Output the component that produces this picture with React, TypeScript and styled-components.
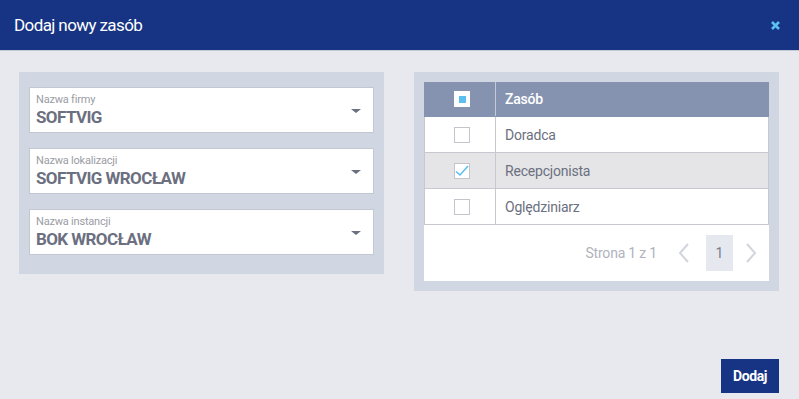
import React, { useState } from 'react';
import styled, { createGlobalStyle } from 'styled-components';

const GlobalStyle = createGlobalStyle`
  html, body {
    margin: 0;
    padding: 0;
    background: #e8e9ee;
    font-family: Roboto, "Liberation Sans", sans-serif;
  }
  * { box-sizing: border-box; }
`;

const Dialog = styled.div`
  width: 799px;
  height: 399px;
  display: flex;
  flex-direction: column;
  background: #e8e9ee;
`;

const Header = styled.div`
  height: 51px;
  flex-shrink: 0;
  background: #163384;
  border-bottom: 1px solid #c5c9d3;
  display: flex;
  align-items: center;
  justify-content: space-between;
  padding: 0 19px 0 14px;
`;

const Title = styled.h1`
  margin: 0;
  font-size: 17px;
  font-weight: 400;
  color: #ffffff;
  letter-spacing: -0.6px;
`;

const CloseButton = styled.button`
  border: none;
  background: none;
  padding: 0;
  width: 9px;
  height: 9px;
  display: flex;
  cursor: pointer;
`;

const Body = styled.div`
  flex: 1;
  display: flex;
  align-items: flex-start;
  gap: 30px;
  padding: 21px 20px 0 19px;
`;

const Panel = styled.div<{ $pad: string }>`
  width: 365px;
  background: #d1d7e2;
  padding: ${p => p.$pad};
  display: flex;
  flex-direction: column;
  gap: 15px;
`;

const Field = styled.div`
  height: 46px;
  background: #ffffff;
  border: 1px solid #c3c7d1;
  padding: 5px 12px 0 6px;
  display: flex;
  align-items: center;
  justify-content: space-between;
  cursor: pointer;
`;

const FieldText = styled.div`
  display: flex;
  flex-direction: column;
  align-self: flex-start;
`;

const FieldLabel = styled.span`
  font-size: 11px;
  line-height: 13px;
  color: #9a9ca4;
  letter-spacing: -0.2px;
`;

const FieldValue = styled.span`
  font-size: 17px;
  line-height: 22px;
  font-weight: 700;
  color: #6b6f80;
  letter-spacing: -0.6px;
`;

const Caret = styled.span`
  width: 0;
  height: 0;
  border-left: 5px solid transparent;
  border-right: 5px solid transparent;
  border-top: 4px solid #6b6f80;
  margin-top: -3px;
`;

const Table = styled.div`
  display: flex;
  flex-direction: column;
  background: #ffffff;
`;

const Row = styled.div<{ $head?: boolean; $selected?: boolean; $h: number }>`
  display: grid;
  grid-template-columns: 71px 1fr;
  height: ${p => p.$h}px;
  background: ${p => (p.$head ? '#8593b0' : p.$selected ? '#e5e5e7' : '#ffffff')};
  border: 1px solid #c8c9d0;
  border-top: none;
  border-color: ${p => (p.$head ? '#8593b0' : '#c8c9d0')};
`;

const CheckCell = styled.div<{ $head?: boolean }>`
  display: flex;
  align-items: center;
  justify-content: center;
  border-right: 1px solid ${p => (p.$head ? '#c5cad6' : '#c8c9d0')};
  padding-left: 4px;
`;

const TextCell = styled.div<{ $head?: boolean }>`
  display: flex;
  align-items: center;
  padding-left: 9px;
  font-size: 14px;
  color: ${p => (p.$head ? '#ffffff' : '#6b7080')};
  font-weight: ${p => (p.$head ? 500 : 400)};
  letter-spacing: -0.2px;
`;

const Box = styled.span<{ $head?: boolean }>`
  width: 16px;
  height: 16px;
  background: #ffffff;
  border: 1px solid ${p => (p.$head ? '#ffffff' : '#c3c4cc')};
  display: flex;
  align-items: center;
  justify-content: center;
  cursor: pointer;
`;

const Partial = styled.span`
  width: 7px;
  height: 7px;
  background: #5bc0f0;
`;

const Pager = styled.div`
  height: 56px;
  display: flex;
  align-items: center;
  justify-content: flex-end;
  padding-right: 11px;
`;

const PageInfo = styled.span`
  font-size: 14px;
  color: #b0b3bd;
  letter-spacing: -0.2px;
  margin-right: 20px;
`;

const Arrow = styled.button`
  border: none;
  background: none;
  padding: 0;
  width: 14px;
  height: 20px;
  display: flex;
  align-items: center;
  justify-content: center;
`;

const PageNum = styled.span`
  width: 27px;
  height: 36px;
  background: #e6e8ef;
  color: #7a7d88;
  font-size: 14px;
  display: flex;
  align-items: center;
  justify-content: center;
  margin: 0 11px 0 15px;
`;

const Footer = styled.div`
  display: flex;
  justify-content: flex-end;
  padding: 0 20px 6px 0;
`;

const SubmitButton = styled.button`
  width: 58px;
  height: 34px;
  border: none;
  background: #163384;
  color: #ffffff;
  font-family: Roboto, "Liberation Sans", sans-serif;
  font-size: 14px;
  font-weight: 700;
  letter-spacing: -0.4px;
  cursor: pointer;
`;

const fields = [
  { label: 'Nazwa firmy', value: 'SOFTVIG' },
  { label: 'Nazwa lokalizacji', value: 'SOFTVIG WROCŁAW' },
  { label: 'Nazwa instancji', value: 'BOK WROCŁAW' },
];

const resources = ['Doradca', 'Recepcjonista', 'Oględziniarz'];

const Chevron = ({ dir }: { dir: 'left' | 'right' }) => (
  <svg width="12" height="20" viewBox="0 0 12 20">
    <path
      d={dir === 'left' ? 'M10 1 L2 10 L10 19' : 'M2 1 L10 10 L2 19'}
      fill="none"
      stroke="#d3d5dc"
      strokeWidth="2"
    />
  </svg>
);

const App: React.FC = () => {
  const [selected, setSelected] = useState<string[]>(['Recepcjonista']);

  const toggle = (name: string) =>
    setSelected(prev => (prev.includes(name) ? prev.filter(n => n !== name) : [...prev, name]));

  return (
    <>
      <GlobalStyle />
      <Dialog>
        <Header>
          <Title>Dodaj nowy zasób</Title>
          <CloseButton aria-label="Zamknij">
            <svg width="9" height="9" viewBox="0 0 9 9">
              <path d="M1 1 L8 8 M8 1 L1 8" stroke="#5bc0f0" strokeWidth="2.6" />
            </svg>
          </CloseButton>
        </Header>

        <Body>
          <Panel $pad="15px 10px 19px">
            {fields.map(f => (
              <Field key={f.label}>
                <FieldText>
                  <FieldLabel>{f.label}</FieldLabel>
                  <FieldValue>{f.value}</FieldValue>
                </FieldText>
                <Caret />
              </Field>
            ))}
          </Panel>

          <Panel $pad="10px">
            <Table>
              <Row $head $h={35}>
                <CheckCell $head>
                  <Box $head>
                    <Partial />
                  </Box>
                </CheckCell>
                <TextCell $head>Zasób</TextCell>
              </Row>
              {resources.map(r => {
                const checked = selected.includes(r);
                return (
                  <Row key={r} $selected={checked} $h={36}>
                    <CheckCell>
                      <Box onClick={() => toggle(r)}>
                        {checked && (
                          <svg width="14" height="12" viewBox="0 0 14 12">
                            <path d="M1 6.5 L5 10 L13 1" fill="none" stroke="#5bc0f0" strokeWidth="1.6" />
                          </svg>
                        )}
                      </Box>
                    </CheckCell>
                    <TextCell>{r}</TextCell>
                  </Row>
                );
              })}
              <Pager>
                <PageInfo>Strona 1 z 1</PageInfo>
                <Arrow aria-label="Poprzednia">
                  <Chevron dir="left" />
                </Arrow>
                <PageNum>1</PageNum>
                <Arrow aria-label="Następna">
                  <Chevron dir="right" />
                </Arrow>
              </Pager>
            </Table>
          </Panel>
        </Body>

        <Footer>
          <SubmitButton>Dodaj</SubmitButton>
        </Footer>
      </Dialog>
    </>
  );
};

export default App;
